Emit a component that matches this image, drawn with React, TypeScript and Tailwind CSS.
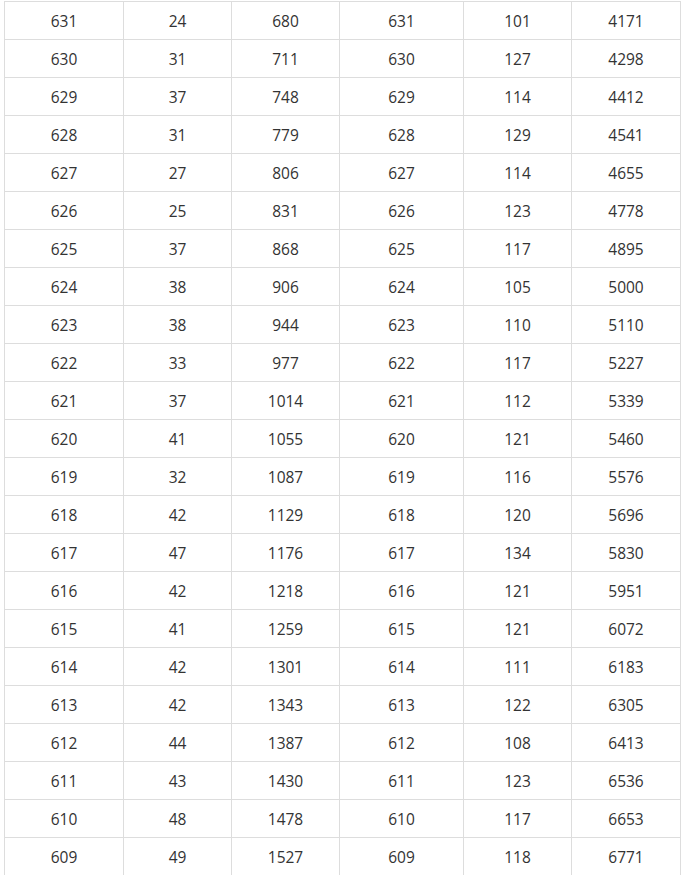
const rows: [number, number, number, number, number, number][] = [
  [631, 24, 680, 631, 101, 4171],
  [630, 31, 711, 630, 127, 4298],
  [629, 37, 748, 629, 114, 4412],
  [628, 31, 779, 628, 129, 4541],
  [627, 27, 806, 627, 114, 4655],
  [626, 25, 831, 626, 123, 4778],
  [625, 37, 868, 625, 117, 4895],
  [624, 38, 906, 624, 105, 5000],
  [623, 38, 944, 623, 110, 5110],
  [622, 33, 977, 622, 117, 5227],
  [621, 37, 1014, 621, 112, 5339],
  [620, 41, 1055, 620, 121, 5460],
  [619, 32, 1087, 619, 116, 5576],
  [618, 42, 1129, 618, 120, 5696],
  [617, 47, 1176, 617, 134, 5830],
  [616, 42, 1218, 616, 121, 5951],
  [615, 41, 1259, 615, 121, 6072],
  [614, 42, 1301, 614, 111, 6183],
  [613, 42, 1343, 613, 122, 6305],
  [612, 44, 1387, 612, 108, 6413],
  [611, 43, 1430, 611, 123, 6536],
  [610, 48, 1478, 610, 117, 6653],
  [609, 49, 1527, 609, 118, 6771],
];

export default function App() {
  return (
    <div className="w-[684px] h-[875px] overflow-hidden bg-white pt-[1px] pl-[4px]">
      <div
        className="grid grid-cols-[119px_108px_108px_124px_108px_109px] w-[677px] border-l border-t border-[#dddddd] text-[15.5px] text-[#333333]"
        style={{ fontFamily: '"Open Sans", "Noto Sans", sans-serif' }}
      >
        {rows.map((r, i) =>
          r.map((v, j) => (
            <div
              key={`${i}-${j}`}
              className="h-[38px] pt-[2px] flex items-center justify-center border-r border-b border-[#dddddd]"
            >
              {v}
            </div>
          ))
        )}
      </div>
    </div>
  );
}
